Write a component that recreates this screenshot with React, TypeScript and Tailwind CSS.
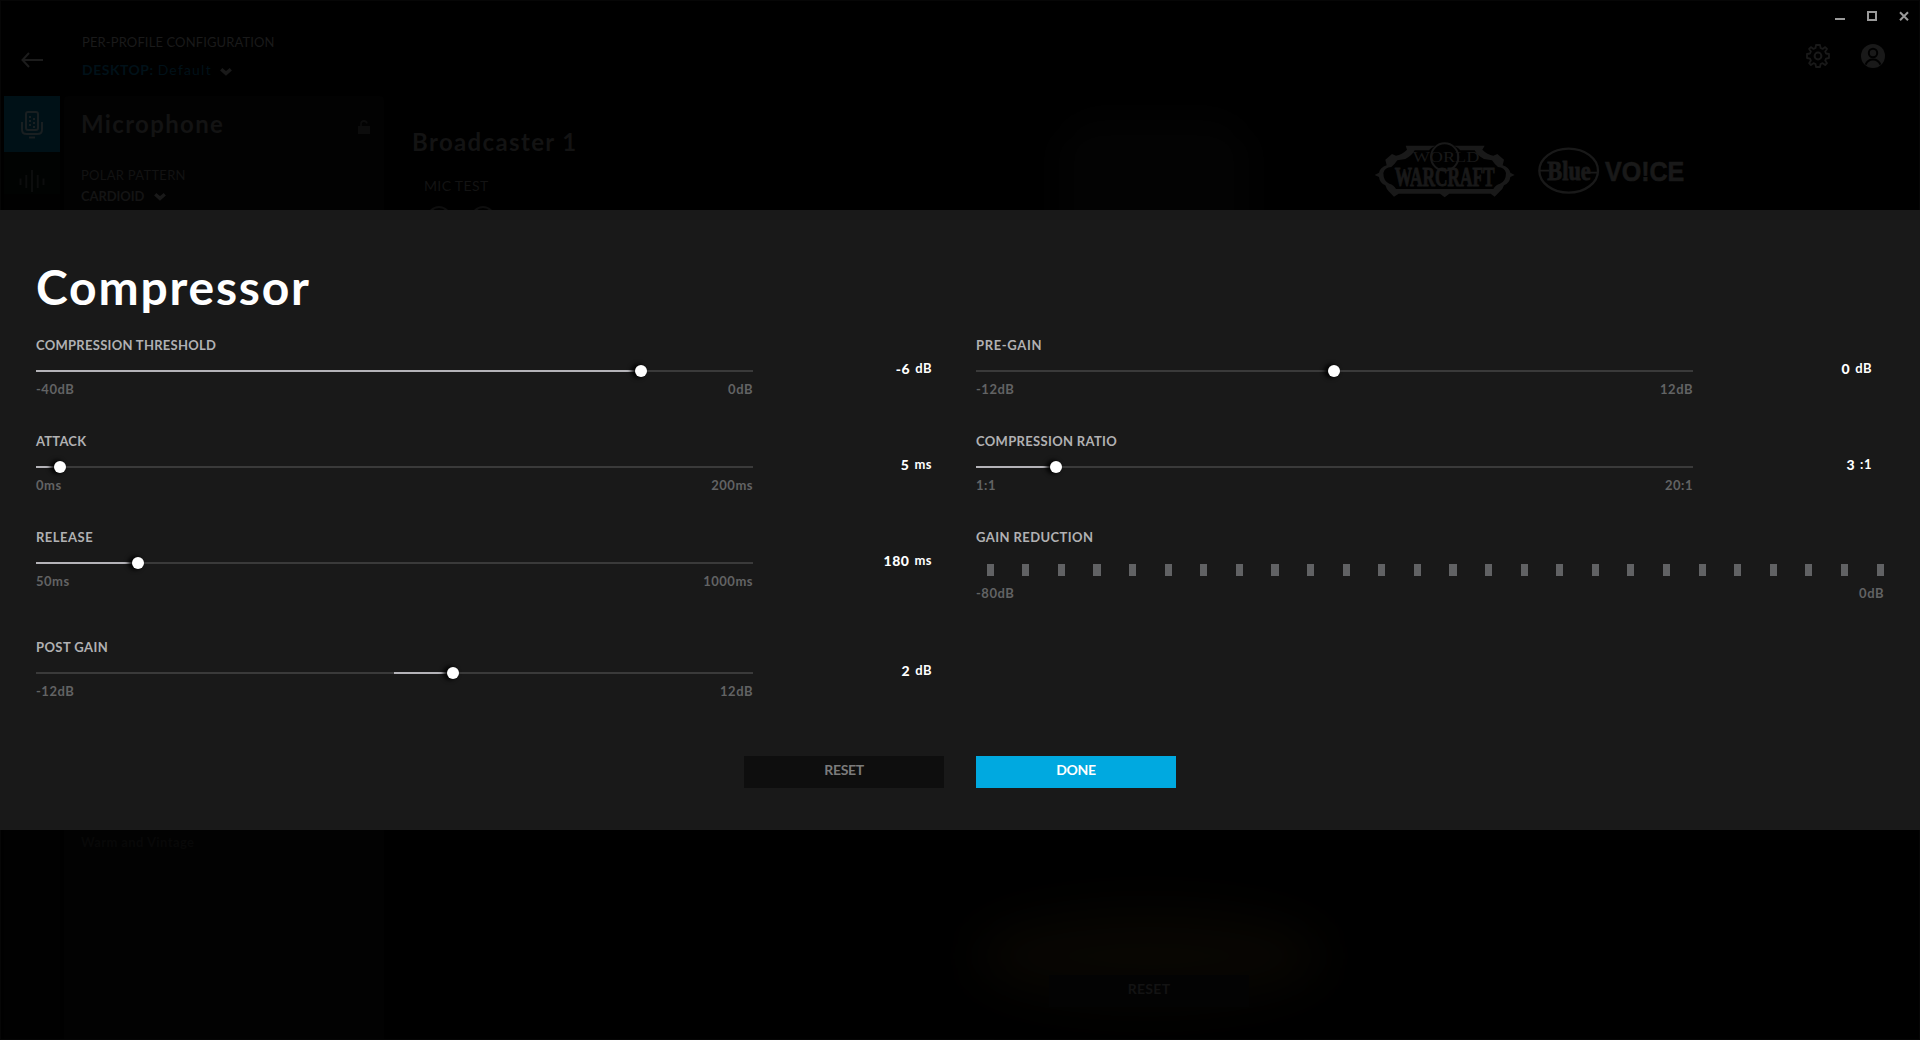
import type { ReactNode } from "react";

type SliderProps = {
  label: ReactNode;
  min: string;
  max: string;
  value: string;
  unit: string;
  position: number;
  origin?: number;
};

const TRACK = 717;
const KNOB = 12;

function Label({ children }: { children: ReactNode }) {
  return <div className="h-4 text-[13px] leading-4 font-bold whitespace-nowrap text-[#b1b1b3]">{children}</div>;
}

function Range({ min, max }: { min: string; max: string }) {
  return (
    <div className="flex h-4 justify-between text-[13px] leading-4 font-bold tracking-[0.5px] text-[#626364]">
      <span>{min}</span>
      <span>{max}</span>
    </div>
  );
}

function Slider({ label, min, max, value, unit, position, origin = 0 }: SliderProps) {
  const knob = Math.ceil(position * (TRACK - KNOB) - 0.5);
  const start = Math.floor(origin * TRACK);
  return (
    <div className="flex h-[60px] justify-between pr-3">
      <div className="w-[717px]">
        <Label>{label}</Label>
        <div className="relative mt-[17px] mb-[9px] h-0.5 bg-[#3a3a3a]">
          <div
            className="absolute top-0 h-0.5 bg-[#b4b3b8]"
            style={{ left: start, width: Math.max(0, knob + 6 - start) }}
          />
          <div
            className="absolute -top-[5px] size-3 rounded-full bg-white shadow-[-3px_0_4px_1px_rgba(0,0,0,0.9)]"
            style={{ left: knob }}
          />
        </div>
        <Range min={min} max={max} />
      </div>
      <div className="flex gap-[5px] pt-6 leading-4 font-bold text-white">
        <span className="text-[14px] font-black tracking-[0.5px]">{value}</span>
        <span className="-mt-px text-[13px] tracking-[0.5px]">{unit}</span>
      </div>
    </div>
  );
}

function GainReduction() {
  return (
    <div>
      <Label>
        <span className="tracking-[0.42px]">GAIN REDUCTION</span>
      </Label>
      <div className="mt-[19px] mb-[9px] flex h-3 justify-between pl-[10.7px]">
        {Array.from({ length: 26 }, (_, i) => (
          <div key={i} className="h-3 w-[7.12px] bg-[#616264]" />
        ))}
      </div>
      <Range min="-80dB" max="0dB" />
    </div>
  );
}

function CompressorDialog() {
  return (
    <section className="absolute inset-x-0 top-[210px] h-[620px] bg-[#191919] px-9 pt-12">
      <h1 className="h-[79px] text-[48px] leading-[57px] font-bold tracking-[1.8px] text-white">Compressor</h1>
      <div className="grid grid-cols-2 gap-x-8">
        <div className="flex flex-col gap-9">
          <Slider
            label={<span className="tracking-[0.28px]">COMPRESSION THRESHOLD</span>}
            min="-40dB"
            max="0dB"
            value="-6"
            unit="dB"
            position={34 / 40}
          />
          <Slider
            label={<span className="tracking-[0.2px]">ATTACK</span>}
            min="0ms"
            max="200ms"
            value="5"
            unit="ms"
            position={5 / 200}
          />
          <Slider
            label={<span className="tracking-[0.5px]">RELEASE</span>}
            min="50ms"
            max="1000ms"
            value="180"
            unit="ms"
            position={130 / 950}
          />
          <div className="mt-3.5">
            <Slider
              label={<span className="tracking-[0.4px]">POST GAIN</span>}
              min="-12dB"
              max="12dB"
              value="2"
              unit="dB"
              position={14 / 24}
              origin={0.5}
            />
          </div>
        </div>
        <div className="flex flex-col gap-9">
          <Slider
            label={<span className="tracking-[0.65px]">PRE-GAIN</span>}
            min="-12dB"
            max="12dB"
            value="0"
            unit="dB"
            position={0.5}
            origin={0.5}
          />
          <Slider
            label={<span className="tracking-[0.33px]">COMPRESSION RATIO</span>}
            min="1:1"
            max="20:1"
            value="3"
            unit=":1"
            position={2 / 19}
          />
          <GainReduction />
        </div>
      </div>
      <div className="mt-[57px] flex justify-center gap-8 text-[14px] leading-[27px] font-bold tracking-[-0.35px]">
        <button className="flex h-8 w-[200px] items-start justify-center bg-[#0e0e0e] text-[#7b7b7b]">RESET</button>
        <button className="flex h-8 w-[200px] items-start justify-center bg-[#00a9e0] text-white">DONE</button>
      </div>
    </section>
  );
}

function Chevron() {
  return (
    <svg width="12" height="8" viewBox="0 0 12 8" fill="none" stroke="#191919" strokeWidth="3.4">
      <path d="M1.2 1.3 L6 5.4 L10.8 1.3" />
    </svg>
  );
}

function GearIcon() {
  return (
    <svg width="24" height="24" viewBox="0 0 24 24" fill="none" stroke="#191919" strokeWidth="1.8" strokeLinejoin="round">
      <path d="M10 1 H14 L14.6 4 L16.6 4.9 L19.2 3.1 L21 4.9 L19.2 7.5 L20 9.5 L23 10 V14 L20 14.6 L19.2 16.6 L21 19.2 L19.2 21 L16.6 19.2 L14.6 20 L14 23 H10 L9.5 20 L7.5 19.2 L4.9 21 L3.1 19.2 L4.9 16.6 L4 14.6 L1 14 V10 L4 9.5 L4.9 7.5 L3.1 4.9 L4.9 3.1 L7.5 4.9 L9.5 4 Z" />
      <circle cx="12" cy="12" r="3.4" strokeWidth="2" />
    </svg>
  );
}

function AccountIcon() {
  return (
    <svg width="24" height="24" viewBox="0 0 24 24">
      <circle cx="12" cy="12" r="12" fill="#191919" />
      <circle cx="12" cy="9" r="4.2" fill="#191919" stroke="#000" strokeWidth="2" />
      <path d="M4.6 20.6 C6 17 8.6 15.4 12 15.4 S18 17 19.4 20.6" fill="none" stroke="#000" strokeWidth="2" />
    </svg>
  );
}

function WindowControls() {
  return (
    <svg className="block" width="74" height="10" viewBox="0 0 74 10" fill="none" stroke="#9a9a9a" strokeWidth="2">
      <path d="M0 8 H10" />
      <rect x="33" y="1" width="8" height="8" />
      <path d="M65 1.2 L73 9.2 M73 1.2 L65 9.2" />
    </svg>
  );
}

function MicIcon() {
  return (
    <svg width="24" height="28" viewBox="0 0 24 28" fill="none" stroke="#191f21" strokeWidth="2">
      <rect x="6" y="1" width="12" height="18" rx="2" />
      <path d="M2 11 V18.5 Q2 23 6.500 23 H17.500 Q22 23 22 18.500 V11" />
      <path d="M9 26.500 H15" />
      <path d="M10 5 V16 M14 7 V17" strokeDasharray="2 2" />
    </svg>
  );
}

function WaveIcon() {
  return (
    <svg width="26" height="22" viewBox="0 0 26 22" stroke="#0c0d0d" strokeWidth="2">
      <path d="M1.500 8.500 V15 M7.300 5 V18 M13 0 V22 M18.700 5 V18 M24.500 8.500 V15" />
    </svg>
  );
}

function UnlockIcon() {
  return (
    <svg width="12" height="14" viewBox="0 0 12 14">
      <rect y="6" width="12" height="8" fill="#0c0c0c" />
      <path d="M3 6 V4 Q3 1 6 1 Q8.500 1 9 3.500" fill="none" stroke="#0c0c0c" strokeWidth="1.800" />
    </svg>
  );
}

function WarcraftLogo() {
  return (
    <svg className="block overflow-visible" width="142" height="58" viewBox="100 64 426 174">
      <circle cx="312" cy="112" r="41" fill="#000" stroke="#191919" strokeWidth="6" />
      <path
        fill="#191919"
        fillRule="evenodd"
        d="M195 78 H284 Q270 84 265 92 H222 Q214 108 194 118 L170 122 Q162 134 152 142 Q132 144 128 160 Q128 184 146 192 Q160 196 166 208 H458 Q464 196 478 192 Q496 184 496 160 Q492 144 472 142 Q462 134 454 122 L430 118 Q410 108 402 92 H359 Q354 84 340 78 H432 L425 90 Q440 105 458 108 L470 103 L490 120 L486 137 Q506 144 509 159 L522 166 L509 172 Q507 190 490 197 Q486 210 478 215 L462 231 L450 222 H326 L312 233 L298 222 H174 L160 231 L144 215 Q138 210 134 197 Q117 190 115 172 L102 166 L115 159 Q118 144 138 137 L134 120 L154 103 L166 108 Q184 105 199 90 Z"
      />
      <text x="216" y="126" fontFamily="Liberation Serif" fontSize="43" textLength="200" lengthAdjust="spacingAndGlyphs" fill="#191919">
        WORLD
      </text>
      <text
        x="162"
        y="199"
        fontFamily="Liberation Serif"
        fontWeight="700"
        fontSize="80"
        textLength="300"
        lengthAdjust="spacingAndGlyphs"
        fill="#191919"
        stroke="#191919"
        strokeWidth="3"
      >
        WARCRAFT
      </text>
    </svg>
  );
}

function BlueVoiceLogo() {
  return (
    <svg className="block overflow-visible" width="148" height="50" viewBox="594 78 444 150">
      <ellipse cx="686" cy="152" rx="88" ry="66" fill="none" stroke="#191919" strokeWidth="7" />
      <path d="M600 152 H628 M744 158 H772" stroke="#191919" strokeWidth="5" />
      <text x="622" y="180" fontFamily="Liberation Serif" fontWeight="700" fontSize="84" textLength="130" lengthAdjust="spacingAndGlyphs" fill="#191919" stroke="#191919" strokeWidth="3">
        Blue
      </text>
      <text x="795" y="182" fontFamily="Liberation Sans" fontWeight="700" fontSize="84" textLength="238" lengthAdjust="spacingAndGlyphs" fill="#191919" stroke="#191919" strokeWidth="2">
        VO!CE
      </text>
    </svg>
  );
}

function Header() {
  return (
    <header className="flex h-[95px] justify-between">
      <div className="flex">
        <svg className="mt-[51px] ml-5" width="22" height="16" viewBox="0 0 22 16" fill="none" stroke="#1c1c1c" strokeWidth="2">
          <path d="M22 8 H1.500 M8 1 L1.500 8 L8 15" />
        </svg>
        <div className="ml-[39px] pt-[33px]">
          <div className="text-[13px] leading-4 tracking-[0.12px] text-[#1a1a1a]">PER-PROFILE CONFIGURATION</div>
          <div className="mt-3 flex items-center text-[14px] leading-4 text-[#001119]">
            <span className="font-bold tracking-[0.5px]">DESKTOP:</span>
            <span className="ml-1 tracking-[1.2px]">Default</span>
            <span className="mt-[3px] ml-2">
              <Chevron />
            </span>
          </div>
        </div>
      </div>
      <div className="flex flex-col items-end">
        <div className="mt-2.5 mr-2.5">
          <WindowControls />
        </div>
        <div className="mt-[23px] mr-[34px] flex gap-[31px]">
          <GearIcon />
          <AccountIcon />
        </div>
      </div>
    </header>
  );
}

function Background() {
  return (
    <div className="flex h-[1040px] flex-col border border-[#060606] bg-black">
      <Header />
      <div className="flex flex-1">
        <nav className="ml-[3px] flex w-14 flex-col bg-[#010101]">
          <div className="flex h-14 items-center justify-center bg-[#001117] pt-0.5">
            <MicIcon />
          </div>
          <div className="flex h-[42px] items-center justify-center bg-[#010302] pt-4">
            <WaveIcon />
          </div>
        </nav>
        <aside className="ml-1 flex w-80 flex-col rounded-t bg-[#020202] pl-[17px]">
          <div className="flex h-[60px] items-start justify-between pt-3.5 pr-3.5">
            <h2 className="text-[24px] leading-[28px] font-bold tracking-[1.33px] text-[#131313]">Microphone</h2>
            <span className="mt-2.5">
              <UnlockIcon />
            </span>
          </div>
          <div className="mt-[11px] text-[13px] leading-4 tracking-[0.28px] text-[#121212]">POLAR PATTERN</div>
          <div className="mt-[5px] flex items-center text-[13px] leading-4 font-bold tracking-[-0.1px] text-[#141414]">
            CARDIOID
            <span className="ml-2.5 pt-0.5">
              <Chevron />
            </span>
          </div>
          <div className="mt-[630px] text-[13px] leading-4 font-bold tracking-[0.4px] text-[#080808]">Warm and Vintage</div>
        </aside>
        <main className="relative flex-1">
          <div className="absolute top-6 left-[675px] h-[170px] w-[190px] rounded-[40px] bg-[#030303] blur-lg" />
          <div className="absolute top-[815px] left-[590px] h-[90px] w-[350px] rounded-[50%] bg-[#080602] blur-xl" />
          <div className="relative flex justify-between pt-8 pr-[233px] pl-7">
            <div>
              <h2 className="text-[24px] leading-[28px] font-bold tracking-[1.36px] text-[#131313]">Broadcaster 1</h2>
              <div className="mt-[22px] ml-3 text-[14px] leading-4 tracking-[0.36px] text-[#131313]">MIC TEST</div>
              <div className="mt-3 ml-[15px] flex gap-5">
                <div className="size-6 rounded-full border-2 border-[#0e0e0e]" />
                <div className="size-6 rounded-full border-2 border-[#0e0e0e]" />
              </div>
            </div>
            <div className="flex gap-[22px] pt-[13px]">
              <WarcraftLogo />
              <div className="mt-[5px]">
                <BlueVoiceLogo />
              </div>
            </div>
          </div>
          <div className="relative mt-[745px] ml-[665px] flex h-8 w-[200px] justify-center bg-[#030303] text-[14px] leading-[27px] font-bold tracking-[0.3px] text-[#131313]">
            RESET
          </div>
        </main>
      </div>
    </div>
  );
}

export default function App() {
  return (
    <div className="relative h-[1040px] w-[1920px] overflow-hidden bg-black font-['Lato',sans-serif]">
      <Background />
      <CompressorDialog />
    </div>
  );
}
